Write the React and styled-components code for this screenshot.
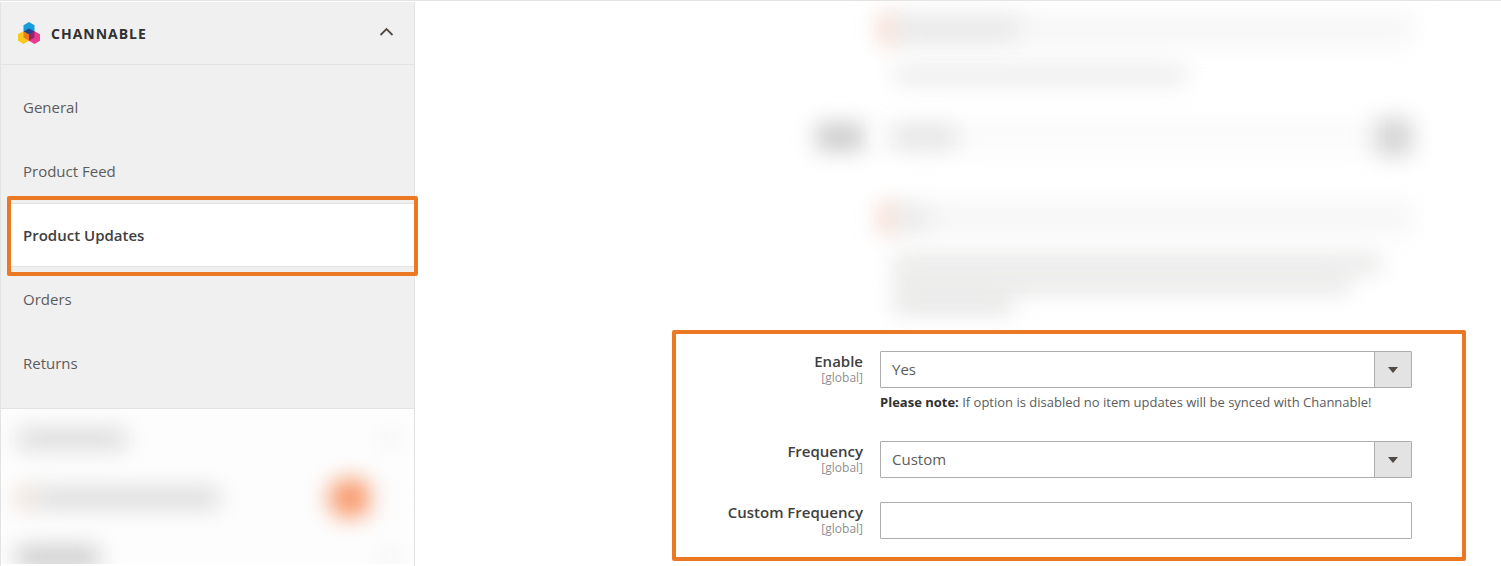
import React, { useState } from "react";
import styled, { createGlobalStyle } from "styled-components";

const GlobalStyle = createGlobalStyle`
  * {
    box-sizing: border-box;
  }

  body {
    margin: 0;
    background: #fff;
    color: #41362f;
    font-family: "Open Sans", "Noto Sans", sans-serif;
    font-size: 15px;
  }
`;

const Page = styled.div`
  display: flex;
  min-height: 100vh;
  border-top: 1px solid #e3e3e3;
`;

// left config navigation
const Sidebar = styled.aside`
  display: flex;
  flex-direction: column;
  flex: 0 0 415px;
  margin-top: 1px;
  border: 1px solid #e3e3e3;
  border-width: 0 1px;
`;

const TitleButton = styled.button`
  display: flex;
  align-items: center;
  gap: 10px;
  height: 63px;
  padding: 0 20px 0 16px;
  border: 0;
  border-bottom: 1px solid #e3e3e3;
  background: #f0f0f0;
  color: #303030;
  font-family: inherit;
  font-size: 14px;
  font-weight: 700;
  letter-spacing: 1px;
  cursor: pointer;
`;

const Title = styled.span`
  flex: 1;
  text-align: left;
`;

const NavList = styled.ul`
  margin: 0;
  padding: 10px 0 13px 10px;
  border-bottom: 1px solid #e3e3e3;
  background: #f0f0f0;
  list-style: none;
`;

const NavItem = styled.li`
  position: relative;
  background: ${({ $active }) => ($active ? "#fff" : "transparent")};
  box-shadow: ${({ $active }) =>
    $active ? "inset 0 1px #e3e3e3, inset 0 -1px #e3e3e3" : "none"};
`;

const NavLink = styled.a`
  display: flex;
  align-items: center;
  height: 64px;
  padding: 0 0 1px 12px;
  color: ${({ $active }) => ($active ? "#404040" : "#5c5c5c")};
  font-weight: ${({ $active }) => ($active ? 600 : 400)};
  text-decoration: none;
`;

// orange frame around the active link
const NavFrame = styled.span`
  position: absolute;
  top: -7px;
  right: -4px;
  bottom: -9px;
  left: -4px;
  z-index: 1;
  border: 4px solid #eb7823;
  border-radius: 2px;
  pointer-events: none;
`;

const HiddenSection = styled.div`
  display: flex;
  align-items: center;
  justify-content: space-between;
  height: ${({ $last }) => ($last ? "37px" : "59px")};
  padding: ${({ $last }) => ($last ? "22px 16px 0 16px" : "0 16px 0 16px")};
  overflow: ${({ $last }) => ($last ? "hidden" : "visible")};
  background: #fdfdfd;
`;

// blurred piece of content
const Smudge = styled.div`
  width: ${({ $width }) => $width};
  height: ${({ $height }) => $height || "20px"};
  flex-shrink: 0;
  border-radius: ${({ $round }) => ($round ? "50%" : "0")};
  background: ${({ $color }) => $color || "#e4e4e4"};
  filter: blur(11px);
`;

const SmudgeGroup = styled.div`
  display: flex;
  align-items: center;
  gap: ${({ $gap }) => $gap || "0"};
`;

const Main = styled.main`
  flex: 1;
  min-width: 0;
  padding: 0 35px 0 257px;
`;

const HiddenFields = styled.div`
  display: grid;
  gap: 0 16px;
  grid-template-columns: 188px 1fr;
  grid-template-rows: 56px 36px 88px 74px 58px;
  padding: 0 54px 0 4px;
`;

const HiddenLabel = styled.div`
  display: flex;
  align-items: center;
  justify-content: flex-end;
`;

const HiddenField = styled.div`
  display: flex;
  align-items: center;
  grid-column: 2;
`;

const HiddenBar = styled.div`
  position: relative;
  flex: 1;
  display: flex;
  align-items: center;
  justify-content: space-between;
  height: 36px;
`;

const BarFill = styled.div`
  position: absolute;
  inset: 0;
  background: ${({ $color }) => $color};
  filter: blur(11px);
`;

const HiddenText = styled.div`
  grid-column: 2;
  display: flex;
  flex-direction: column;
  justify-content: center;
  gap: 4px;
  padding-left: 14px;
`;

// framed settings form
const Form = styled.form`
  display: grid;
  grid-template-columns: 187px 1fr;
  column-gap: 17px;
  row-gap: 24px;
  margin-top: 17px;
  padding: 17px 50px 18px 0;
  border: 4px solid #eb7823;
  border-radius: 2px;
`;

const LabelCell = styled.div`
  text-align: right;
`;

const Label = styled.label`
  display: block;
  color: #404040;
  font-weight: 600;
  line-height: 20px;
`;

const Scope = styled.span`
  display: block;
  color: #8f8f8f;
  font-size: 12px;
  line-height: 14px;
`;

const SelectBox = styled.div`
  position: relative;
`;

const controlStyle = `
  display: block;
  width: 100%;
  height: 37px;
  padding: 0 11px 1px;
  border: 1px solid #adadad;
  border-radius: 1px;
  background: #fff;
  color: #5c5c5c;
  font-family: inherit;
  font-size: 15px;
`;

const Select = styled.select`
  ${controlStyle}
  appearance: none;
`;

const Input = styled.input`
  ${controlStyle}
`;

const SelectArrow = styled.span`
  position: absolute;
  top: 1px;
  right: 1px;
  bottom: 1px;
  display: flex;
  align-items: center;
  justify-content: center;
  width: 37px;
  border-left: 1px solid #adadad;
  background: #e3e3e3;
  pointer-events: none;

  &::after {
    content: "";
    border: 5px solid transparent;
    border-top: 6px solid #514943;
    border-bottom: 0;
  }
`;

const Note = styled.p`
  margin: 5px 0 6px;
  color: #5c5c5c;
  font-size: 13px;
  line-height: 18px;

  & > strong {
    color: #303030;
  }
`;

function ChannableLogo() {
  return (
    <svg width="24" height="24" viewBox="0 0 24 24" aria-hidden="true">
      <path d="M12 1l5.500 3.200v6.600L12 14l-5.500-3.200V4.200z" fill="#149fdc" />
      <path d="M6.500 10.200l5.500 3.100v6.500L6.500 23 1 19.800v-6.500z" fill="#fcc721" />
      <path d="M17.500 10.200l5.500 3.100v6.500L17.500 23 12 19.800v-6.500z" fill="#e8388f" />
      <path d="M12 7.500l5.500 2.900-5.500 3.400-5.500-3.400z" fill="#27408f" />
      <path d="M6.500 10.400l5.500 3.400v6l-5.500-3.400z" fill="#ee7a1c" />
      <path d="M17.500 10.400v6L12 19.800v-6z" fill="#94216c" />
    </svg>
  );
}

function Chevron() {
  return (
    <svg width="15" height="12" viewBox="0 0 15 12" aria-hidden="true">
      <path d="M1.500 8L7.500 2l6 6" fill="none" stroke="#514943" strokeWidth="1.800" />
    </svg>
  );
}

const links = ["General", "Product Feed", "Product Updates", "Orders", "Returns"];

function ConfigNav() {
  const [active, setActive] = useState("Product Updates");

  return (
    <Sidebar>
      <TitleButton type="button" aria-expanded="true">
        <ChannableLogo />
        <Title>CHANNABLE</Title>
        <Chevron />
      </TitleButton>
      <NavList>
        {links.map((link) => (
          <NavItem key={link} $active={link === active}>
            <NavLink href="#" $active={link === active} onClick={() => setActive(link)}>
              {link}
            </NavLink>
            {link === active && <NavFrame />}
          </NavItem>
        ))}
      </NavList>
      <HiddenSection>
        <Smudge $width="110px" $color="#dadada" />
        <Smudge $width="16px" $color="#f4f4f4" />
      </HiddenSection>
      <HiddenSection>
        <SmudgeGroup>
          <Smudge $width="20px" $color="#ecdcd2" />
          <Smudge $width="182px" $color="#dadada" />
        </SmudgeGroup>
        <SmudgeGroup $gap="10px">
          <Smudge $width="44px" $height="40px" $color="#f79a6c" $round />
          <Smudge $width="16px" $color="#fafafa" />
        </SmudgeGroup>
      </HiddenSection>
      <HiddenSection $last>
        <Smudge $width="82px" $color="#c8c8c8" />
        <Smudge $width="16px" $color="#f4f4f4" />
      </HiddenSection>
    </Sidebar>
  );
}

function HiddenSettings() {
  return (
    <HiddenFields aria-hidden="true">
      <HiddenField>
        <HiddenBar>
          <BarFill $color="#f7f7f7" />
          <SmudgeGroup>
            <Smudge $width="16px" $height="28px" $color="#fbd6c6" />
            <Smudge $width="122px" $color="#e6e6e6" />
          </SmudgeGroup>
        </HiddenBar>
      </HiddenField>
      <HiddenText>
        <Smudge $width="292px" $height="16px" $color="#e8e8e8" />
      </HiddenText>
      <HiddenLabel>
        <Smudge $width="48px" $height="28px" $color="#cccccc" />
      </HiddenLabel>
      <HiddenField>
        <HiddenBar>
          <BarFill $color="#fbfbfb" />
          <SmudgeGroup>
            <Smudge $width="14px" $color="#fcfcfc" />
            <Smudge $width="62px" $color="#e2e2e2" />
          </SmudgeGroup>
          <Smudge $width="36px" $height="36px" $color="#d4d4d4" />
        </HiddenBar>
      </HiddenField>
      <HiddenField>
        <HiddenBar>
          <BarFill $color="#f7f7f7" />
          <SmudgeGroup>
            <Smudge $width="16px" $height="28px" $color="#fbd6c6" />
            <Smudge $width="32px" $color="#e8e8e8" />
          </SmudgeGroup>
        </HiddenBar>
      </HiddenField>
      <HiddenText>
        <Smudge $width="94%" $height="16px" $color="#e4e4e3" />
        <Smudge $width="88%" $height="16px" $color="#e4e4e3" />
        <Smudge $width="118px" $height="16px" $color="#e0e0df" />
      </HiddenText>
    </HiddenFields>
  );
}

function FieldLabel({ id, text }) {
  return (
    <LabelCell>
      <Label htmlFor={id}>{text}</Label>
      <Scope>[global]</Scope>
    </LabelCell>
  );
}

function UpdateSettings() {
  return (
    <Form>
      <FieldLabel id="enable" text="Enable" />
      <div>
        <SelectBox>
          <Select id="enable" defaultValue="Yes">
            <option>Yes</option>
            <option>No</option>
          </Select>
          <SelectArrow />
        </SelectBox>
        <Note>
          <strong>Please note:</strong> If option is disabled no item updates will be synced
          with Channable!
        </Note>
      </div>

      <FieldLabel id="frequency" text="Frequency" />
      <SelectBox>
        <Select id="frequency" defaultValue="Custom">
          <option>Custom</option>
        </Select>
        <SelectArrow />
      </SelectBox>

      <FieldLabel id="custom-frequency" text="Custom Frequency" />
      <Input id="custom-frequency" type="text" />
    </Form>
  );
}

function App() {
  return (
    <>
      <GlobalStyle />
      <Page>
        <ConfigNav />
        <Main>
          <HiddenSettings />
          <UpdateSettings />
        </Main>
      </Page>
    </>
  );
}

export default App;
